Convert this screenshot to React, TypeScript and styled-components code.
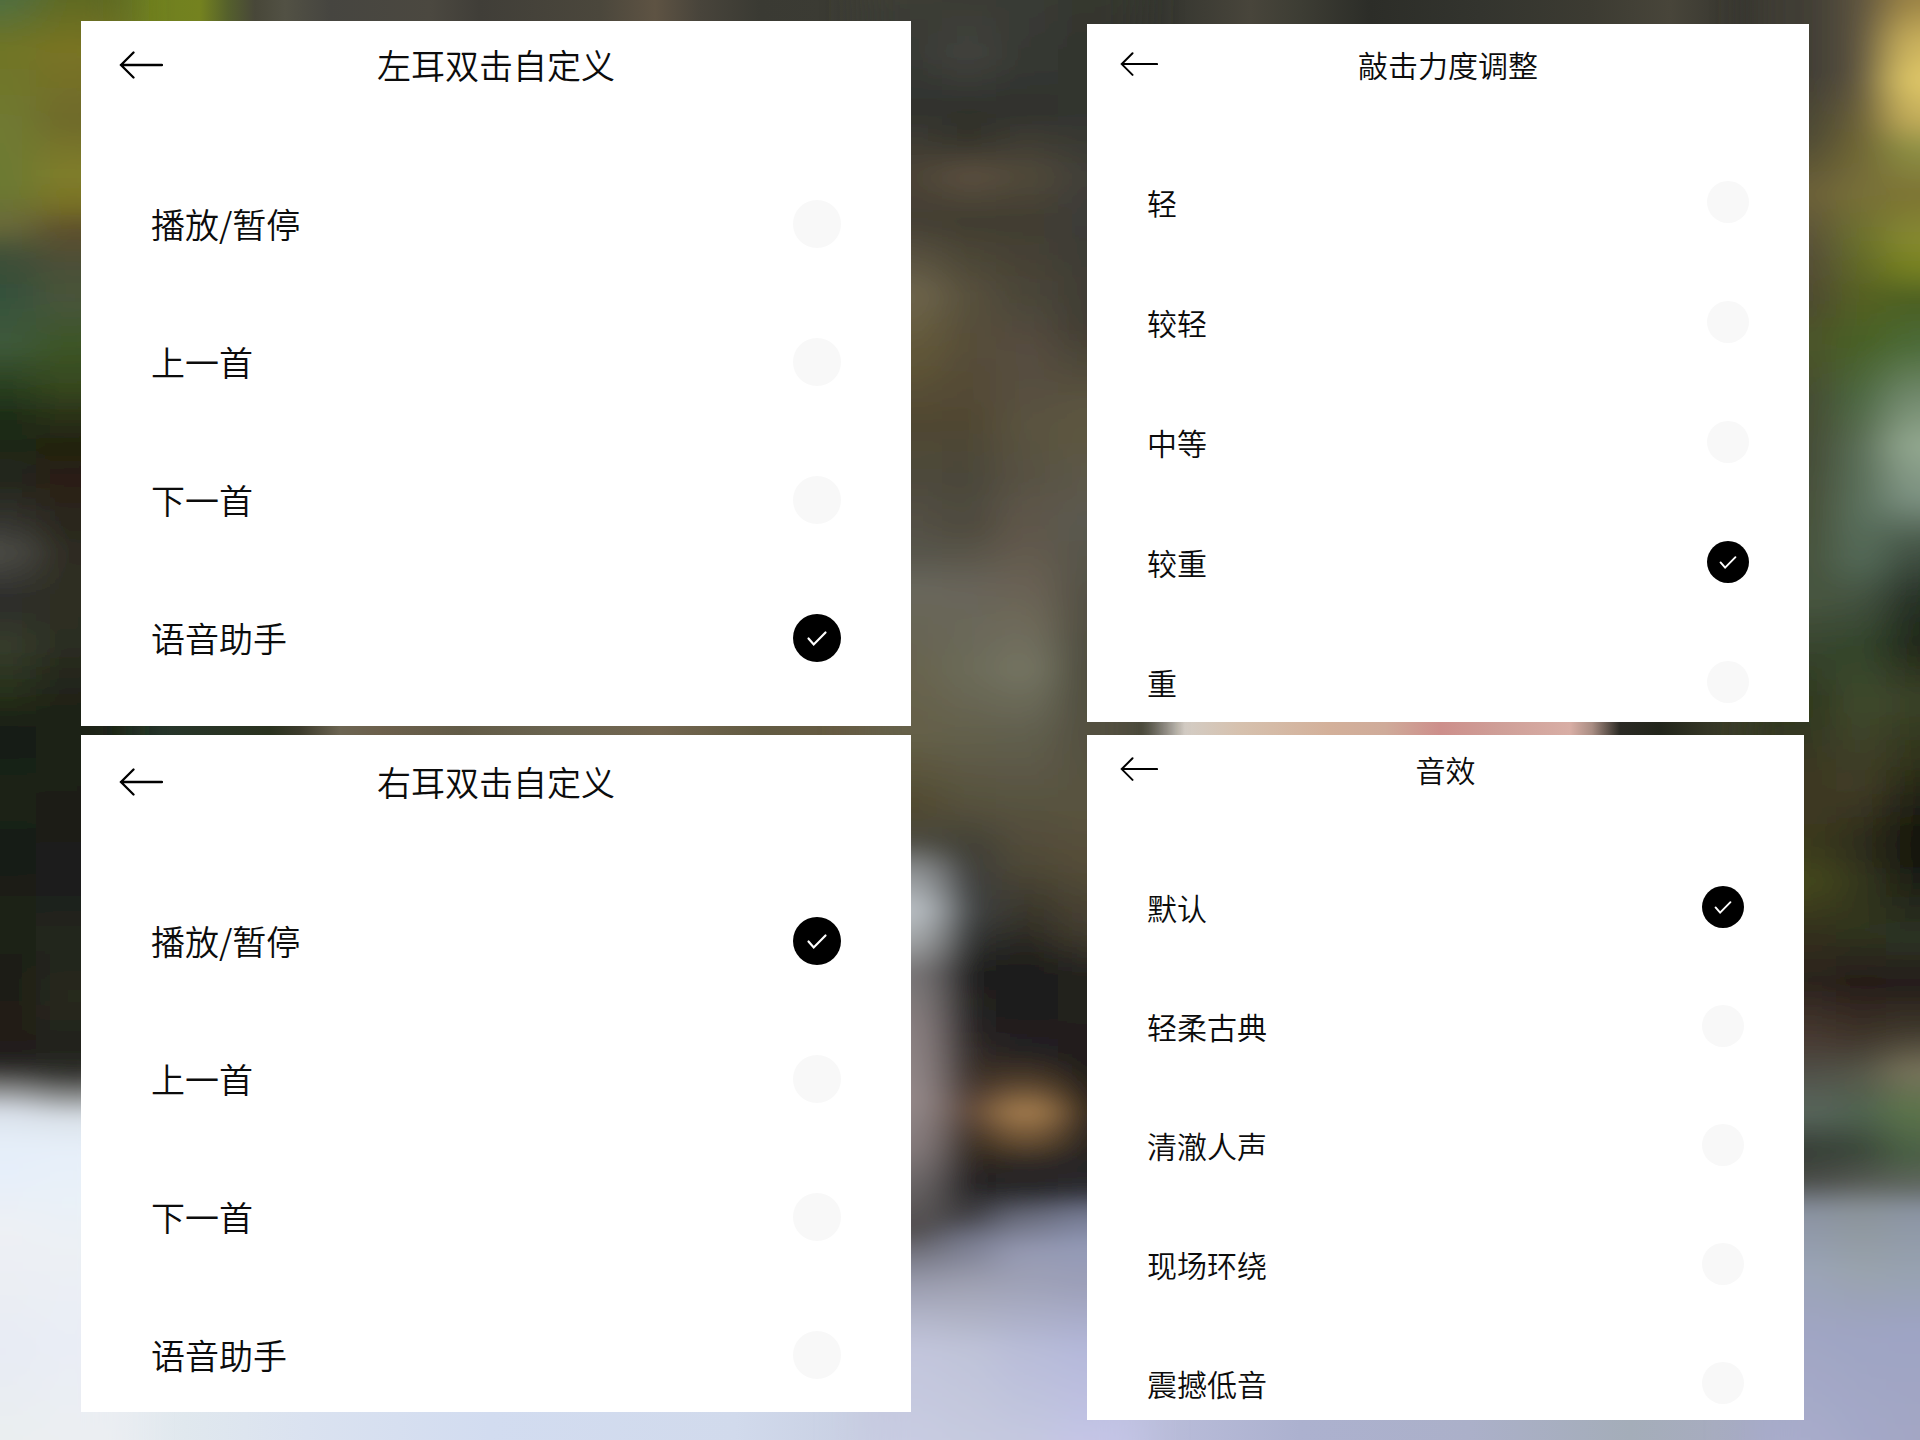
import React, { useId, useState } from "react";
import styled, { createGlobalStyle, css } from "styled-components";

const GlobalStyle = createGlobalStyle`
  *, *::before, *::after { box-sizing: border-box; }
  body {
    margin: 0;
    background: #45423a;
    color: #0c0c0c;
    font-family: "Noto Sans CJK SC", "Noto Sans", sans-serif;
    font-weight: 350;
  }
`;

/* ---------- blurred photo backdrop ---------- */

type Stop = [at: number, color: string];

interface Strip {
  x: number;
  y: number;
  w: number;
  h: number;
  stops: Stop[];
}

// Horizontal bands: offsets are x positions.
const bands: Strip[] = [
  {
    x: 0, y: 0, w: 1920, h: 360,
    stops: [
      [0, "#4f6e40"], [40, "#5c6426"], [80, "#5a682a"], [150, "#6f801f"], [200, "#74821f"],
      [228, "#55602c"], [255, "#484739"], [285, "#525144"], [330, "#464540"], [430, "#4b4840"],
      [480, "#403e38"], [600, "#4b473c"], [655, "#5e5343"], [700, "#48443b"], [760, "#3a3a33"],
      [880, "#3c3c34"], [1000, "#42413a"], [1085, "#32332e"], [1160, "#34352f"], [1250, "#48453b"],
      [1300, "#3d3d34"], [1370, "#2c2d28"], [1480, "#33342e"], [1590, "#3c3b32"], [1670, "#48453a"],
      [1750, "#33332d"], [1800, "#3a382f"], [1850, "#62583f"], [1920, "#a8934c"],
    ],
  },
  {
    x: 0, y: 360, w: 1920, h: 700,
    stops: [
      [0, "#182013"], [80, "#1f301d"], [160, "#26352a"], [270, "#2a321f"], [300, "#3c3b2c"],
      [340, "#6c6552"], [380, "#6c604c"], [460, "#625b47"], [560, "#6a6450"], [660, "#72654f"],
      [760, "#625b42"], [860, "#665a42"], [911, "#665f48"], [1087, "#46483a"], [1140, "#3f4133"],
      [1160, "#85827a"], [1185, "#d3ccc4"], [1240, "#d6c1ae"], [1330, "#d3b09a"], [1385, "#cfab9a"],
      [1440, "#cd8f8b"], [1500, "#cf9f98"], [1570, "#d8aea5"], [1592, "#a98d83"], [1620, "#2b2a24"],
      [1660, "#22251b"], [1720, "#393a28"], [1800, "#3b3f29"], [1920, "#282d1b"],
    ],
  },
  {
    x: 0, y: 1060, w: 1920, h: 380,
    stops: [
      [0, "#e9edf0"], [90, "#ebeef2"], [184, "#e0e8ee"], [306, "#dae2f0"], [490, "#d2dcf0"],
      [735, "#d1daec"], [860, "#c8cfe2"], [920, "#c2c6dc"], [1080, "#c3c5e4"], [1130, "#bcbfdc"],
      [1300, "#acb1cf"], [1470, "#abb0c9"], [1630, "#a4adb9"], [1715, "#a7acbf"], [1813, "#a4a8c8"],
      [1920, "#a3a6c4"],
    ],
  },
];

// Vertical strips between and beside the panels: offsets are y positions.
const strips: Strip[] = [
  {
    x: -80, y: -20, w: 116, h: 1480,
    stops: [
      [0, "#4f6e40"], [45, "#6f7425"], [130, "#6f7a32"], [185, "#6c7a30"], [225, "#6a6a3a"],
      [255, "#3f4f38"], [290, "#34503a"], [345, "#3f5a3a"], [385, "#2a4020"], [420, "#1b2a17"],
      [480, "#23261b"], [520, "#33332f"], [552, "#4c4c46"], [600, "#2b2b29"], [645, "#363c2c"],
      [695, "#26301a"], [730, "#181c12"], [800, "#1a2417"], [860, "#181b14"], [930, "#1e2418"],
      [980, "#1b1a14"], [1015, "#221a16"], [1055, "#1f1d1b"], [1070, "#34332f"], [1090, "#8b8c8c"],
      [1112, "#d9e0ea"], [1140, "#e4edf8"], [1175, "#e6effa"], [1230, "#edf0f4"], [1300, "#eaedf3"],
      [1350, "#e7ebf4"], [1440, "#eaeef0"],
    ],
  },
  {
    x: 36, y: -20, w: 90, h: 1480,
    stops: [
      [0, "#5f6a22"], [50, "#7a7424"], [120, "#6f6a2c"], [175, "#807e2a"], [205, "#787026"],
      [230, "#5d4f2c"], [265, "#4c5038"], [305, "#47543a"], [345, "#3c5526"], [385, "#37491f"],
      [415, "#2b3218"], [445, "#22220f"], [480, "#2a1e14"], [520, "#2b271d"], [570, "#2e2d23"],
      [640, "#2c2e22"], [690, "#22241a"], [730, "#1b2013"], [770, "#1a2112"], [830, "#1b1c18"],
      [880, "#1d1d1f"], [940, "#22271a"], [1000, "#27291d"], [1050, "#21221b"], [1075, "#32322e"],
      [1095, "#868887"], [1118, "#dbe2ea"], [1150, "#e6eff9"], [1200, "#e9f1f8"], [1250, "#ecf0f4"],
      [1340, "#e9edf5"], [1440, "#ebeef2"],
    ],
  },
  {
    x: 862, y: -20, w: 80, h: 1480,
    stops: [
      [0, "#3c3c34"], [55, "#383a35"], [110, "#30322e"], [175, "#4c4436"], [220, "#433e33"],
      [294, "#6e654c"], [350, "#625838"], [422, "#504732"], [478, "#4e493b"], [551, "#56544a"],
      [588, "#69675c"], [670, "#67634e"], [735, "#656048"], [808, "#50492f"], [840, "#4b4a40"],
      [870, "#8d9092"], [910, "#bcc2c7"], [940, "#a3a6a8"], [973, "#787576"], [1028, "#8a8081"],
      [1100, "#95898a"], [1148, "#857b7c"], [1185, "#6a6566"], [1230, "#4f4c4c"], [1260, "#7c7d8a"],
      [1285, "#9a9cae"], [1320, "#b4b7cb"], [1350, "#c2c5dc"], [1440, "#c8cce2"],
    ],
  },
  {
    x: 942, y: -20, w: 54, h: 1480,
    stops: [
      [0, "#3a3b34"], [55, "#43433d"], [110, "#2e302c"], [140, "#34332b"], [175, "#5c503f"],
      [220, "#403c30"], [294, "#57503c"], [350, "#564d38"], [422, "#504632"], [478, "#4a463a"],
      [530, "#4f4b3e"], [588, "#68645a"], [670, "#6c6b59"], [735, "#63604c"], [808, "#55503c"],
      [850, "#3e3d34"], [880, "#3c3e3c"], [912, "#3f4242"], [973, "#1d1d1b"], [1028, "#262322"],
      [1075, "#3c3029"], [1110, "#5c4536"], [1150, "#33291f"], [1185, "#232121"], [1215, "#3e3d40"],
      [1240, "#74778a"], [1285, "#9fa1b2"], [1350, "#bfc3d8"], [1440, "#c6cadf"],
    ],
  },
  {
    x: 996, y: -20, w: 62, h: 1480,
    stops: [
      [0, "#383a35"], [55, "#363933"], [110, "#2f312d"], [175, "#51493a"], [220, "#413d31"],
      [294, "#4a4538"], [345, "#554c3f"], [422, "#5a523f"], [478, "#585143"], [551, "#635a4e"],
      [588, "#6a6254"], [670, "#747462"], [735, "#615f4e"], [808, "#57523f"], [863, "#4f4937"],
      [920, "#353229"], [973, "#1b1b19"], [1050, "#222021"], [1078, "#4b3a29"], [1112, "#a98050"],
      [1140, "#6b5133"], [1165, "#2a2523"], [1190, "#272628"], [1215, "#666979"], [1250, "#9599b2"],
      [1285, "#9fa2b7"], [1350, "#b8bcd8"], [1440, "#c4c8e0"],
    ],
  },
  {
    x: 1058, y: -20, w: 84, h: 1480,
    stops: [
      [0, "#35372f"], [55, "#32342f"], [110, "#32342f"], [175, "#403f38"], [230, "#3c3b37"],
      [330, "#423e33"], [400, "#5a533f"], [440, "#5d5741"], [520, "#5a5a50"], [588, "#545145"],
      [670, "#4e4c3e"], [735, "#53503f"], [808, "#5a533f"], [863, "#554d38"], [930, "#433d2f"],
      [975, "#23221e"], [1060, "#1f1e1f"], [1112, "#30271f"], [1160, "#262424"], [1190, "#2b2b30"],
      [1212, "#70758c"], [1245, "#9299b6"], [1285, "#9c9fb8"], [1350, "#b4b8da"], [1440, "#c4c5e6"],
    ],
  },
  {
    x: 1752, y: -20, w: 84, h: 1480,
    stops: [
      [0, "#3f3c34"], [73, "#403d34"], [140, "#4f4b34"], [193, "#6c6038"], [248, "#574f38"],
      [300, "#4e4a30"], [340, "#4c5428"], [395, "#454c30"], [450, "#444b35"], [514, "#475039"],
      [600, "#47553f"], [645, "#38452f"], [700, "#2e371e"], [790, "#3f3824"], [845, "#3a3a1d"],
      [882, "#45481d"], [930, "#33301d"], [983, "#2b231c"], [1038, "#483931"], [1085, "#535850"],
      [1112, "#58665c"], [1150, "#363e36"], [1180, "#484a46"], [1212, "#8b93a2"], [1270, "#9aa4b6"],
      [1330, "#a0a5c3"], [1440, "#a8accb"],
    ],
  },
  {
    x: 1836, y: -20, w: 50, h: 1480,
    stops: [
      [0, "#5c533f"], [73, "#5c5340"], [140, "#6e6435"], [193, "#787038"], [240, "#6a702c"],
      [290, "#586223"], [340, "#486023"], [395, "#4c6840"], [450, "#596d55"], [514, "#5a6f5c"],
      [560, "#546a58"], [600, "#435240"], [645, "#33452c"], [700, "#3f4a2e"], [790, "#3f3b25"],
      [845, "#2c2b1a"], [882, "#34361b"], [930, "#2f3420"], [983, "#261c18"], [1038, "#3f352b"],
      [1075, "#55584a"], [1112, "#4f6350"], [1150, "#394639"], [1180, "#52564f"], [1210, "#8b9399"],
      [1270, "#99a3ac"], [1330, "#9ea4c2"], [1440, "#a4a8c8"],
    ],
  },
  {
    x: 1886, y: -20, w: 114, h: 1480,
    stops: [
      [0, "#9c8445"], [40, "#c9b05c"], [80, "#e0c868"], [120, "#c3ad5a"], [150, "#8e9044"],
      [193, "#7d7434"], [240, "#868a2f"], [270, "#75801f"], [300, "#4c5f22"], [345, "#4c6b38"],
      [395, "#71896c"], [445, "#93a890"], [500, "#7b9080"], [540, "#4a5b4c"], [600, "#252f25"],
      [645, "#232719"], [700, "#3a4228"], [760, "#30331b"], [810, "#1e1e12"], [850, "#11120d"],
      [900, "#23261a"], [940, "#2d3324"], [983, "#231c18"], [1030, "#3f382c"], [1070, "#77725a"],
      [1112, "#5c744b"], [1155, "#4a6044"], [1185, "#5f665e"], [1212, "#8c95a4"], [1270, "#97a2b0"],
      [1330, "#9ea4c4"], [1440, "#a3a6c4"],
    ],
  },
];

const BackdropSvg = styled.svg`
  position: absolute;
  inset: 0;
  z-index: -1;
  width: 100%;
  height: 100%;
`;

function Stops({ stops }: { stops: Stop[] }) {
  return (
    <>
      {stops.map(([at, color]) => (
        <stop key={at} offset={at} stopColor={color} />
      ))}
    </>
  );
}

function Backdrop() {
  return (
    <BackdropSvg viewBox="0 0 1920 1440" preserveAspectRatio="none" aria-hidden="true">
      <defs>
        <filter id="soft" filterUnits="userSpaceOnUse" x="-80" y="-20" width="2080" height="1480">
          <feGaussianBlur stdDeviation="20 8" />
        </filter>
        {bands.map((band, i) => (
          <linearGradient key={i} id={`band${i}`} gradientUnits="userSpaceOnUse" x1="0" x2="1920" y1="0" y2="0">
            <Stops stops={band.stops.map(([at, c]) => [at / 1920, c] as Stop)} />
          </linearGradient>
        ))}
        {strips.map((strip, i) => (
          <linearGradient key={i} id={`strip${i}`} gradientUnits="userSpaceOnUse" x1="0" x2="0" y1="0" y2="1440">
            <Stops stops={strip.stops.map(([at, c]) => [at / 1440, c] as Stop)} />
          </linearGradient>
        ))}
      </defs>
      {bands.map((b, i) => (
        <rect key={i} x={b.x} y={b.y} width={b.w} height={b.h} fill={`url(#band${i})`} />
      ))}
      <g filter="url(#soft)">
        {strips.map((s, i) => (
          <rect key={i} x={s.x} y={s.y} width={s.w} height={s.h} fill={`url(#strip${i})`} />
        ))}
      </g>
    </BackdropSvg>
  );
}

/* ---------- layout ---------- */

const Page = styled.main`
  position: relative;
  isolation: isolate;
  overflow: hidden;
  display: grid;
  grid-template-columns: 830fr 722fr;
  column-gap: 176px;
  align-items: start;
  min-height: 100vh;
  padding: 0 111px 0 81px;
`;

const Column = styled.div<{ $top: number; $gap: number }>`
  display: flex;
  flex-direction: column;
  gap: ${(p) => p.$gap}px;
  padding-top: ${(p) => p.$top}px;
`;

type Size = "large" | "regular";

const sizes = {
  large: { font: 34, line: 48, dot: 48, rowGap: 90, inset: 70, headInset: 38, arrow: 44, listTop: 111 },
  regular: { font: 30, line: 42, dot: 42, rowGap: 78, inset: 60, headInset: 33, arrow: 38, listTop: 96 },
};

const Panel = styled.section<{ $size: Size; $top: number; $bottom: number; $narrow?: boolean }>`
  display: flex;
  flex-direction: column;
  gap: ${(p) => sizes[p.$size].listTop}px;
  padding: ${(p) => p.$top}px 0 ${(p) => p.$bottom}px;
  background: #fff;
  font-size: ${(p) => sizes[p.$size].font}px;
  line-height: ${(p) => sizes[p.$size].line}px;
  ${(p) => p.$narrow && css`margin-right: 5px;`}
`;

const Header = styled.header<{ $size: Size }>`
  display: grid;
  grid-template-columns: 1fr auto 1fr;
  align-items: center;
  padding: 0 ${(p) => sizes[p.$size].headInset}px;
`;

const BackButton = styled.button`
  display: flex;
  justify-self: start;
  padding: 0;
  border: 0;
  background: none;
  color: #000;
  cursor: pointer;
`;

const Title = styled.h2`
  margin: 0;
  font-size: inherit;
  font-weight: inherit;
`;

const List = styled.div<{ $size: Size; $tight?: boolean }>`
  display: flex;
  flex-direction: column;
  gap: ${(p) => sizes[p.$size].rowGap - (p.$tight ? 1 : 0)}px;
  padding: 0 ${(p) => sizes[p.$size].inset}px;
`;

const Row = styled.label`
  display: flex;
  align-items: center;
  justify-content: space-between;
  cursor: pointer;
`;

const Dot = styled.span<{ $size: Size }>`
  display: grid;
  width: ${(p) => sizes[p.$size].dot}px;
  height: ${(p) => sizes[p.$size].dot}px;

  > * {
    grid-area: 1 / 1;
    width: 100%;
    height: 100%;
  }
`;

const Radio = styled.input`
  appearance: none;
  margin: 0;
  border-radius: 50%;
  background: #f8f8f8;
  cursor: pointer;

  &:checked {
    background: #000;
  }

  & + svg {
    visibility: hidden;
    pointer-events: none;
  }

  &:checked + svg {
    visibility: visible;
  }
`;

function ArrowLeft({ width }: { width: number }) {
  return (
    <svg width={width} height={(width * 28) / 44} viewBox="0 0 44 28" fill="none" stroke="currentColor" strokeWidth="2.300" strokeLinecap="round">
      <path d="M43 14H2M14.500 1.500L2 14L14.500 26.500" />
    </svg>
  );
}

function Check() {
  return (
    <svg viewBox="0 0 48 48" fill="none" stroke="#fff" strokeWidth="2.200" strokeLinecap="round">
      <path d="M15.500 24.500L20.700 30.500L32.500 18.500" />
    </svg>
  );
}

interface PickerProps {
  size: Size;
  title: string;
  options: string[];
  initial: string;
  top: number;
  bottom: number;
  narrow?: boolean;
}

function Picker({ size, title, options, initial, top, bottom, narrow }: PickerProps) {
  const name = useId();
  const [value, setValue] = useState(initial);
  return (
    <Panel $size={size} $top={top} $bottom={bottom} $narrow={narrow}>
      <Header $size={size}>
        <BackButton type="button" aria-label="返回">
          <ArrowLeft width={sizes[size].arrow} />
        </BackButton>
        <Title>{title}</Title>
      </Header>
      <List $size={size} $tight={narrow} role="radiogroup" aria-label={title}>
        {options.map((option) => (
          <Row key={option}>
            {option}
            <Dot $size={size}>
              <Radio type="radio" name={name} checked={value === option} onChange={() => setValue(option)} />
              <Check />
            </Dot>
          </Row>
        ))}
      </List>
    </Panel>
  );
}

const tapActions = ["播放/暂停", "上一首", "下一首", "语音助手"];

export default function App() {
  return (
    <Page>
      <GlobalStyle />
      <Backdrop />
      <Column $top={21} $gap={9}>
        <Picker size="large" title="左耳双击自定义" options={tapActions} initial="语音助手" top={20} bottom={64} />
        <Picker size="large" title="右耳双击自定义" options={tapActions} initial="播放/暂停" top={23} bottom={33} />
      </Column>
      <Column $top={24} $gap={13}>
        <Picker
          size="regular"
          title="敲击力度调整"
          options={["轻", "较轻", "中等", "较重", "重"]}
          initial="较重"
          top={19}
          bottom={19}
        />
        <Picker
          size="regular"
          title="音效"
          options={["默认", "轻柔古典", "清澈人声", "现场环绕", "震撼低音"]}
          initial="默认"
          top={13}
          bottom={16}
          narrow
        />
      </Column>
    </Page>
  );
}
